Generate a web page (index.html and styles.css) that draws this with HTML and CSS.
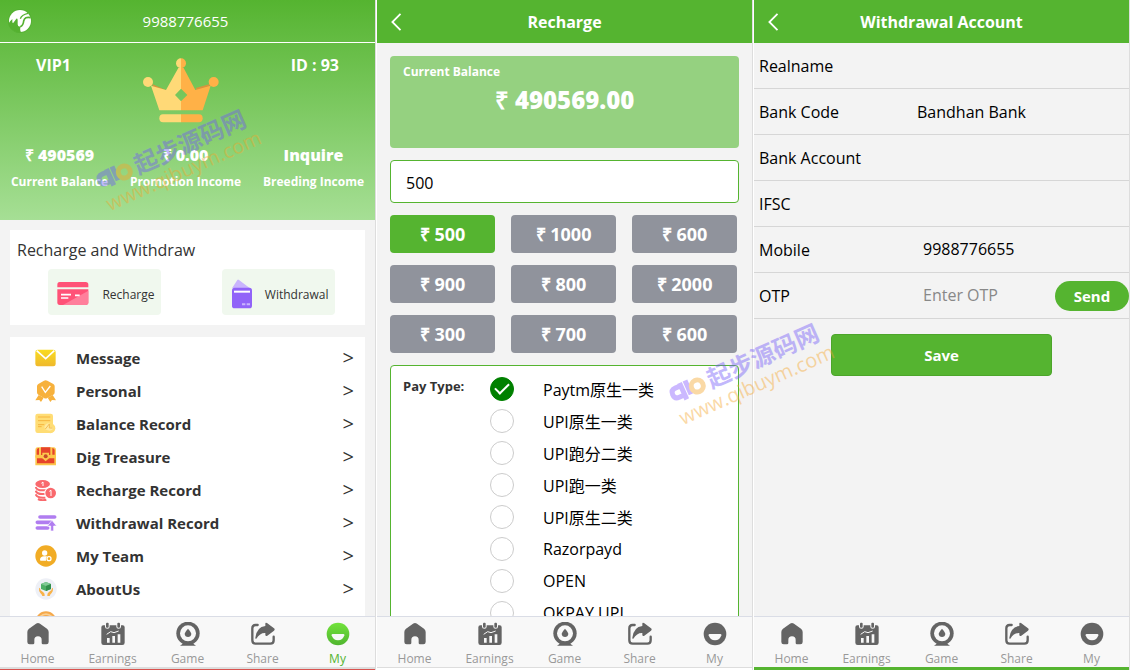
FILE: index.html
```html
<!DOCTYPE html>
<html lang="en">
<head>
<meta charset="UTF-8" />
<meta name="viewport" content="width=device-width, initial-scale=1" />
<title>My Wallet</title>
<link rel="stylesheet" href="styles.css">
</head>
<body>

<!-- tab bar icons, shared by all screens -->
<svg class="sprite" aria-hidden="true">
  <symbol id="icon-home" viewBox="0 0 72 72">
    <path d="M31 4.500Q36 1 41 4.500L63 20Q68 24 68 30V60Q68 67 61 67H51Q47 67 47 63V54Q47 43 36 43T25 54V63Q25 67 21 67H11Q4 67 4 60V30Q4 24 9 20Z"/>
  </symbol>
  <symbol id="icon-earnings" viewBox="0 0 72 72">
    <path d="M7 10H12V14Q12 20 19 20T26 14V10H46V14Q46 20 53 20T60 14V10H65Q71 10 71 16V62Q71 69 64 69H8Q1 69 1 62V16Q1 10 7 10Z"/>
    <rect x="15" y="2" width="8" height="15" rx="3"/>
    <rect x="49" y="2" width="8" height="15" rx="3"/>
    <path d="M17 37L29 29L39 32L53 27" fill="none" stroke="#f8f8f8" stroke-width="3"/>
    <path d="M18 48H26V62H18ZM34 42H42V62H34ZM50 37H58V62H50Z" fill="#f8f8f8"/>
  </symbol>
  <symbol id="icon-game" viewBox="0 0 72 72">
    <path d="M21 62H51Q52 67 60 71H12Q20 67 21 62Z"/>
    <circle cx="36" cy="34" r="35"/>
    <circle cx="36" cy="34" r="24" fill="#f8f8f8"/>
    <path d="M36 20Q46 31 46 36Q45 45 36 45T26 36Q26 31 36 20Z"/>
  </symbol>
  <symbol id="icon-share" viewBox="0 0 72 72">
    <path d="M20 9H14Q4 9 4 19V55Q4 65 14 65H58Q68 65 68 55V44" fill="none" stroke="currentColor" stroke-width="7" stroke-linecap="round"/>
    <path d="M43 5Q43 0 48 3L69 19Q73 22 69 26L49 41Q44 44 43 39V33Q27 32 16 50Q13 52 13 47Q17 15 43 12Z"/>
  </symbol>
  <symbol id="icon-my" viewBox="0 0 72 72">
    <circle cx="36" cy="36" r="34"/>
    <path d="M20 36H52Q56 36 55 40Q51 55 36 55T17 40Q16 36 20 36Z" fill="#f8f8f8"/>
  </symbol>
</svg>

<main class="screens">

  <section class="screen">
    <div class="profile">
      <header class="profile-bar">
        <svg class="logo" viewBox="0 0 72 72" aria-hidden="true">
          <circle cx="36" cy="36" r="36" fill="#48a628" opacity="0.4"/>
          <circle cx="36" cy="36" r="33" fill="#fff"/>
          <path d="M1 44Q6 36 13 30V39Q14 45 18 39L25 29Q29 26 29 34V46Q30 56 39 51Q34 59 39 70Q28 73 19 67Q4 58 1 44Z" fill="#55b130"/>
          <path d="M37 53Q46 49 47 36Q50 22 68 26" fill="none" stroke="#55b130" stroke-width="5"/>
          <path d="M37 29Q41 17 60 13" fill="none" stroke="#55b130" stroke-width="4"/>
        </svg>
        <span>9988776655</span>
      </header>

      <div class="vip">
        <strong>VIP1</strong>
        <svg class="crown" viewBox="0 0 228 195" aria-hidden="true">
          <path d="M27 78L68 96L60 110L32 88Z" fill="#d8943d"/>
          <path d="M201 78L158 90L166 110L198 88Z" fill="#d8943d"/>
          <path d="M49 157L24 83L69 96L106 30H114V92L96 111L114 130V157Z" fill="#ffd977"/>
          <path d="M179 157L203 83L157 96L122 30H114V92L133 111L114 130V157Z" fill="#ffb147"/>
          <circle cx="15" cy="72" r="15" fill="#ffd977"/>
          <circle cx="212" cy="72" r="15" fill="#ffb147"/>
          <path d="M114 1A15 15 0 0 0 114 31Z" fill="#ffd977"/>
          <path d="M114 1A15 15 0 0 1 114 31Z" fill="#ffb147"/>
          <path d="M114 169H60Q49 169 49 181T60 193H114Z" fill="#ffd977"/>
          <path d="M114 169H168Q179 169 179 181T168 193H114Z" fill="#ffb147"/>
        </svg>
        <strong>ID : 93</strong>
      </div>

      <div class="stats">
        <div class="stat"><b>₹ 490569</b><span>Current Balance</span></div>
        <div class="stat"><b>₹ 0.00</b><span>Promotion Income</span></div>
        <div class="stat"><b>Inquire</b><span>Breeding Income</span></div>
      </div>
    </div>

    <div class="content">
      <div class="wallet">
        <h2>Recharge and Withdraw</h2>
        <div class="wallet-actions">
          <a href="#recharge">
            <svg class="card-icon" viewBox="0 0 96 72" aria-hidden="true">
              <path d="M8 0H86Q94 0 94 8V16H1V8Q1 0 8 0Z" fill="#ff5277"/>
              <path d="M1 22H94V61Q94 69 86 69H8Q1 69 1 61Z" fill="#ff5277"/>
              <path d="M94 26V61Q94 69 86 69H18Z" fill="#ff7f9b"/>
              <path d="M12 38H42M12 48H34M54 40H68" stroke="#fff" stroke-width="5"/>
            </svg>
            Recharge
          </a>
          <a href="#withdrawal">
            <svg class="purse-icon" viewBox="0 0 64 90" aria-hidden="true">
              <path d="M2 28L18 3Q20 0 23 3L56 28Z" fill="#c9b4fd"/>
              <rect x="2" y="26" width="60" height="62" rx="8" fill="#9163f8"/>
              <path d="M8 38H56" stroke="#fff" stroke-width="6"/>
              <path d="M32 76H42M46 76H56" stroke="#c9b4fd" stroke-width="6"/>
            </svg>
            Withdrawal
          </a>
        </div>
      </div>

      <nav class="menu">
        <a href="#message">
          <svg viewBox="0 0 66 66" aria-hidden="true">
            <defs><linearGradient id="mail" x1="0" y1="0" x2="0" y2="1"><stop offset="0" stop-color="#f9dc20"/><stop offset="1" stop-color="#efb82c"/></linearGradient></defs>
            <rect x="1" y="8" width="61" height="50" rx="7" fill="url(#mail)"/>
            <path d="M5 11L32 35L58 11" fill="none" stroke="#fff" stroke-width="5"/>
          </svg>
          <span>Message</span><i>&gt;</i>
        </a>
        <a href="#personal">
          <svg viewBox="0 0 66 66" aria-hidden="true">
            <path d="M11 45L26 53L18 66L13 60L1 61Z" fill="#f7b13c"/>
            <path d="M53 45L38 53L46 66L51 60L63 61Z" fill="#f7b13c"/>
            <path d="M27 2Q32-1 37 2L55 12Q59 14 59 19V37Q59 42 55 44L37 54Q32 57 27 54L10 44Q6 42 6 37V19Q6 14 10 12Z" fill="#f7b13c"/>
            <path d="M20 20L31 37L46 18" fill="none" stroke="#fff" stroke-width="4"/>
          </svg>
          <span>Personal</span><i>&gt;</i>
        </a>
        <a href="#balance-record">
          <svg viewBox="0 0 66 66" aria-hidden="true">
            <rect x="1" y="2" width="53" height="58" rx="7" fill="#ffdd75"/>
            <circle cx="46" cy="46" r="15" fill="#ffdd75"/>
            <path d="M9 12H46M9 23H46M9 35H28M9 41H20" stroke="#f6b53e" stroke-width="3"/>
            <path d="M28 43A15 15 0 0 1 43 31V43H55Q54 53 44 53Q30 53 28 43Z" fill="#ffe9a0"/>
            <path d="M31 48L43 33V45H53" fill="none" stroke="#f3bd55" stroke-width="3"/>
          </svg>
          <span>Balance Record</span><i>&gt;</i>
        </a>
        <a href="#dig-treasure">
          <svg viewBox="0 0 66 66" aria-hidden="true">
            <path d="M8 4H56Q63 4 63 14V58H1V14Q1 4 8 4Z" fill="#fcc64c"/>
            <path d="M18 4H46V27H18ZM6 10Q8 6 12 6V26H5V14ZM52 6Q56 6 59 11V26H52ZM6 37H58V52H6Z" fill="#e6432b"/>
            <path d="M1 28H63V35H1Z" fill="#fcc64c"/>
            <path d="M22 20H42V37L32 46L22 37Z" fill="#fcc64c"/>
            <circle cx="32" cy="31" r="6" fill="#c5492b"/>
          </svg>
          <span>Dig Treasure</span><i>&gt;</i>
        </a>
        <a href="#recharge-record">
          <svg viewBox="0 0 66 66" aria-hidden="true">
            <ellipse cx="23" cy="15" rx="22" ry="12" fill="#f9696d"/>
            <g fill="none" stroke="#f9696d" stroke-width="6">
              <path d="M2 24Q6 35 24 34Q40 34 45 26"/>
              <path d="M2 35Q6 46 24 45Q29 45 32 44"/>
              <path d="M2 46Q6 56 24 56H31"/>
              <path d="M9 60Q20 66 34 62"/>
            </g>
            <circle cx="47" cy="42" r="19" fill="#fff"/>
            <circle cx="47" cy="42" r="16" fill="#f9696d"/>
            <path d="M19 13L24 9V21M43 37L48 34V51" fill="none" stroke="#fff" stroke-width="3"/>
          </svg>
          <span>Recharge Record</span><i>&gt;</i>
        </a>
        <a href="#withdrawal-record">
          <svg viewBox="0 0 66 66" aria-hidden="true">
            <g fill="none" stroke="#b07df0" stroke-width="11" stroke-linecap="round">
              <path d="M15 15H59M7 31H48M7 48H38"/>
            </g>
            <path d="M51 25L65 42H56V57H47V42H37Z" fill="#b07df0" stroke="#fff" stroke-width="2"/>
          </svg>
          <span>Withdrawal Record</span><i>&gt;</i>
        </a>
        <a href="#my-team">
          <svg viewBox="0 0 66 66" aria-hidden="true">
            <circle cx="33" cy="33" r="32" fill="#f1ac25"/>
            <circle cx="29" cy="24" r="8" fill="#fff"/>
            <path d="M15 45Q15 34 28 34H36Q31 39 33 47H18Q15 47 15 45Z" fill="#fff"/>
            <circle cx="42" cy="41" r="6" fill="none" stroke="#fff" stroke-width="4"/>
          </svg>
          <span>My Team</span><i>&gt;</i>
        </a>
        <a href="#about-us">
          <svg viewBox="0 0 66 66" aria-hidden="true">
            <circle cx="33" cy="33" r="32" fill="#eef0f6"/>
            <path d="M33 12L48 18V33L33 39L18 33V18Z" fill="#4eaf66"/>
            <path d="M33 12L48 18L33 24L18 18Z" fill="#81c995"/>
            <path d="M33 24V39L48 33V18Z" fill="#328e4c"/>
            <path d="M12 29Q16 29 17 37L25 43Q30 46 29 54H22Q21 49 16 45Q11 39 12 29ZM54 29Q50 29 49 37L41 43Q36 46 37 54H44Q45 49 50 45Q55 39 54 29Z" fill="#f8b248"/>
          </svg>
          <span>AboutUs</span><i>&gt;</i>
        </a>
        <a href="#more" aria-label="More">
          <svg viewBox="0 0 66 66" aria-hidden="true">
            <circle cx="33" cy="33" r="32" fill="#f5a94b"/>
            <path d="M15 17Q33 2 51 17" fill="none" stroke="#fbd093" stroke-width="5"/>
          </svg>
        </a>
      </nav>
    </div>

    <nav class="tabs">
      <a href="#home"><svg><use href="#icon-home"/></svg>Home</a>
      <a href="#earnings"><svg><use href="#icon-earnings"/></svg>Earnings</a>
      <a href="#game"><svg><use href="#icon-game"/></svg>Game</a>
      <a href="#share"><svg><use href="#icon-share"/></svg>Share</a>
      <a href="#my" class="active">
        <svg viewBox="0 0 72 72">
          <defs><linearGradient id="smile" x1="0" y1="0" x2="0" y2="1"><stop offset="0" stop-color="#72e33c"/><stop offset="1" stop-color="#50b52f"/></linearGradient></defs>
          <circle cx="36" cy="36" r="34" fill="url(#smile)"/>
          <path d="M20 36H52Q56 36 55 40Q51 55 36 55T17 40Q16 36 20 36Z" fill="#f8f8f8"/>
        </svg>My
      </a>
    </nav>
    <div class="edge edge-red"></div>
  </section>

  <section class="screen">
    <header class="title-bar">
      <a href="#back" aria-label="Back"><svg viewBox="0 0 12 20"><path d="M11 1L2 10L11 19"/></svg></a>
      <h1>Recharge</h1>
    </header>

    <form class="content recharge">
      <div class="balance">
        <span>Current Balance</span>
        <strong>₹ 490569.00</strong>
      </div>

      <input class="amount" type="text" value="500" aria-label="Amount">

      <div class="amounts">
        <button type="button" class="selected">₹ 500</button>
        <button type="button">₹ 1000</button>
        <button type="button">₹ 600</button>
        <button type="button">₹ 900</button>
        <button type="button">₹ 800</button>
        <button type="button">₹ 2000</button>
        <button type="button">₹ 300</button>
        <button type="button">₹ 700</button>
        <button type="button">₹ 600</button>
      </div>

      <div class="pay">
        <span class="pay-title">Pay Type:</span>
        <div class="pay-list">
          <label><input type="radio" name="pay" checked>Paytm原生一类</label>
          <label><input type="radio" name="pay">UPI原生一类</label>
          <label><input type="radio" name="pay">UPI跑分二类</label>
          <label><input type="radio" name="pay">UPI跑一类</label>
          <label><input type="radio" name="pay">UPI原生二类</label>
          <label><input type="radio" name="pay">Razorpayd</label>
          <label><input type="radio" name="pay">OPEN</label>
          <label><input type="radio" name="pay">OKPAY UPI</label>
        </div>
      </div>
    </form>

    <nav class="tabs">
      <a href="#home"><svg><use href="#icon-home"/></svg>Home</a>
      <a href="#earnings"><svg><use href="#icon-earnings"/></svg>Earnings</a>
      <a href="#game"><svg><use href="#icon-game"/></svg>Game</a>
      <a href="#share"><svg><use href="#icon-share"/></svg>Share</a>
      <a href="#my"><svg><use href="#icon-my"/></svg>My</a>
    </nav>
    <div class="edge"></div>
  </section>

  <section class="screen">
    <header class="title-bar">
      <a href="#back" aria-label="Back"><svg viewBox="0 0 12 20"><path d="M11 1L2 10L11 19"/></svg></a>
      <h1>Withdrawal Account</h1>
    </header>

    <form class="content account">
      <div class="field">
        <label for="realname">Realname</label>
        <input type="text" id="realname">
      </div>
      <div class="field">
        <label for="bankCode">Bank Code</label>
        <select id="bankCode">
          <option>Bandhan Bank</option>
        </select>
      </div>
      <div class="field">
        <label for="bankAccount">Bank Account</label>
        <input type="text" id="bankAccount">
      </div>
      <div class="field">
        <label for="ifsc">IFSC</label>
        <input type="text" id="ifsc">
      </div>
      <div class="field">
        <label for="mobile">Mobile</label>
        <input type="tel" id="mobile" value="9988776655">
      </div>
      <div class="field">
        <label for="otp">OTP</label>
        <input type="text" id="otp" placeholder="Enter OTP">
        <button type="button" class="send">Send</button>
      </div>
      <button type="submit" class="save">Save</button>
    </form>

    <nav class="tabs">
      <a href="#home"><svg><use href="#icon-home"/></svg>Home</a>
      <a href="#earnings"><svg><use href="#icon-earnings"/></svg>Earnings</a>
      <a href="#game"><svg><use href="#icon-game"/></svg>Game</a>
      <a href="#share"><svg><use href="#icon-share"/></svg>Share</a>
      <a href="#my"><svg><use href="#icon-my"/></svg>My</a>
    </nav>
    <div class="edge edge-green"></div>
  </section>

</main>

<div class="watermark watermark-first">
  <div class="watermark-name">
    <svg viewBox="0 0 38 24" aria-hidden="true">
      <path d="M14 6H8Q3 6 3 11T8 16H14M14 3V21M20 3V18" fill="none" stroke="#6a5cf5" stroke-width="5"/>
      <circle cx="29" cy="13" r="6" fill="none" stroke="#f5a52a" stroke-width="5"/>
    </svg>
    起步源码网
  </div>
  <div class="watermark-url">www.qibuym.com</div>
</div>
<div class="watermark watermark-second">
  <div class="watermark-name">
    <svg viewBox="0 0 38 24" aria-hidden="true">
      <path d="M14 6H8Q3 6 3 11T8 16H14M14 3V21M20 3V18" fill="none" stroke="#8458ff" stroke-width="5"/>
      <circle cx="29" cy="13" r="6" fill="none" stroke="#f5a52a" stroke-width="5"/>
    </svg>
    起步源码网
  </div>
  <div class="watermark-url">www.qibuym.com</div>
</div>

</body>
</html>
```

FILE: styles.css
```css
* {
  box-sizing: border-box;
}

body {
  margin: 0;
  height: 100vh;
  overflow: hidden;
  position: relative;
  background: #fff;
  color: #000;
  font-family: 'Open Sans', 'Noto Sans CJK SC', sans-serif;
  font-size: 16px;
}

h1, h2 {
  margin: 0;
}

a {
  color: inherit;
  text-decoration: none;
}

button, input, select {
  font-family: inherit;
}

.sprite {
  display: none;
}

.screens {
  display: grid;
  grid-template-columns: repeat(3, 1fr);
  gap: 1px;
  height: 100%;
}

.screen {
  display: flex;
  flex-direction: column;
  min-width: 0;
  min-height: 0;
  background: #f3f3f3;
  border-right: 1px solid #ddd;
}

.content {
  flex: 1;
  min-height: 0;
  overflow: hidden;
}

/* Profile */
.profile {
  background: linear-gradient(#55b430, #a6df95);
  color: #fff;
  padding-bottom: 28px;
}

.profile-bar {
  display: grid;
  grid-template-columns: 24px 1fr 24px;
  align-items: center;
  height: 43px;
  padding: 0 12px 0 8px;
  border-bottom: 1px solid #fff;
  font-size: 15px;
  text-align: center;
}

.logo {
  width: 24px;
  height: 24px;
}

.vip {
  display: flex;
  justify-content: space-between;
  padding: 10px 36px 0;
  font-size: 16px;
  line-height: 24px;
}

.crown {
  width: 76px;
  height: 65px;
  margin-top: 5px;
}

.stats {
  display: flex;
  justify-content: space-around;
  margin-top: 20px;
  text-align: center;
}

.stat {
  display: flex;
  flex-direction: column;
  gap: 5px;
  font-size: 12px;
  font-weight: 700;
  line-height: 20px;
}

.stat b {
  font-size: 16px;
  line-height: 24px;
}

.wallet {
  margin: 10px 10px 12px;
  padding: 8px 0 10px 7px;
  background: #fff;
  color: #333;
}

.wallet h2 {
  font-size: 16px;
  font-weight: 400;
  line-height: 24px;
}

.wallet-actions {
  display: flex;
  justify-content: space-around;
  margin-top: 7px;
}

.wallet-actions a {
  display: flex;
  align-items: center;
  justify-content: space-between;
  width: 113px;
  height: 46px;
  padding: 4px 6px 0 9px;
  border-radius: 4px;
  background: #f0f8ee;
  font-size: 12px;
}

.card-icon {
  width: 32px;
  height: 24px;
}

.purse-icon {
  width: 22px;
  height: 30px;
}

.menu {
  margin: 0 10px;
  padding: 4px 11px 4px 25px;
  background: #fff;
  color: #333;
}

.menu a {
  display: flex;
  align-items: center;
  gap: 19px;
  height: 33px;
  font-size: 15px;
  font-weight: 700;
}

.menu svg {
  width: 22px;
  height: 22px;
}

.menu i {
  margin-left: auto;
  font-size: 20px;
  font-style: normal;
  font-weight: 400;
}

/* Tab bar */
.tabs {
  display: grid;
  grid-template-columns: repeat(5, 1fr);
  height: 51px;
  padding-top: 5px;
  border-top: 1px solid #dadde6;
  background: #f8f8f8;
}

.tabs a {
  display: flex;
  flex-direction: column;
  align-items: center;
  gap: 5px;
  color: #999;
  font-size: 12px;
  line-height: 16px;
}

.tabs svg {
  width: 24px;
  height: 24px;
  color: #646464;
  fill: currentColor;
}

.tabs .active {
  color: #55b430;
}

.edge {
  height: 3px;
  border-top: 1px solid #ddd;
  background: #fff;
}

.edge-red {
  border-bottom: 1px solid #d9534f;
  background: #ddd;
}

.edge-green {
  border: 0;
  background: #55b430;
}

/* Title bar */
.title-bar {
  display: grid;
  grid-template-columns: 12px 1fr 12px;
  align-items: center;
  height: 43px;
  padding: 0 13px;
  background: #55b430;
  color: #fff;
}

.title-bar h1 {
  font-size: 16px;
  text-align: center;
}

.title-bar svg {
  display: block;
  width: 12px;
  height: 18px;
  fill: none;
  stroke: #fff;
  stroke-width: 2;
}

/* Recharge */
.recharge {
  display: flex;
  flex-direction: column;
  gap: 12px;
  padding: 13px 13px 0;
}

.balance {
  display: flex;
  flex: none;
  flex-direction: column;
  height: 92px;
  padding: 6px 13px;
  border-radius: 4px;
  background: #95d180;
  color: #fff;
  font-size: 12px;
  font-weight: 700;
  line-height: 20px;
}

.balance strong {
  margin-top: 4px;
  font-size: 24px;
  line-height: 28px;
  text-align: center;
}

.amount {
  flex: none;
  width: 100%;
  height: 43px;
  padding: 2px 15px 0;
  border: 1px solid #55b430;
  border-radius: 4px;
  background: #fff;
  font-size: 16px;
}

.amounts {
  display: grid;
  grid-template-columns: repeat(3, 1fr);
  gap: 12px 16px;
  padding-right: 2px;
}

.amounts button {
  height: 38px;
  padding: 0;
  border: 0;
  border-radius: 4px;
  background: #90939c;
  color: #fff;
  font-size: 18px;
  font-weight: 700;
}

.amounts .selected {
  background: #55b430;
}

.pay {
  display: flex;
  padding: 7px 12px;
  border: 1px solid #55b430;
  border-radius: 4px;
  background: #fff;
}

.pay-title {
  width: 87px;
  color: #333;
  font-size: 13px;
  font-weight: 700;
  line-height: 26px;
}

.pay-list label {
  display: flex;
  align-items: center;
  gap: 29px;
  height: 32px;
  white-space: nowrap;
}

.pay-list input {
  display: grid;
  place-content: center;
  appearance: none;
  width: 24px;
  height: 24px;
  margin: 0;
  border: 1px solid #ccc;
  border-radius: 50%;
  background: #fff;
}

.pay-list input:checked {
  border-color: #008000;
  background: #008000;
}

.pay-list input:checked::after {
  content: '';
  width: 12px;
  height: 6px;
  margin-bottom: 4px;
  border-left: 2px solid #fff;
  border-bottom: 2px solid #fff;
  transform: rotate(-45deg);
}

/* Withdrawal account */
.account {
  display: flex;
  flex-direction: column;
}

.field {
  display: grid;
  grid-template-columns: 158px 1fr auto;
  align-items: center;
  height: 46px;
  padding-left: 5px;
  border-bottom: 1px solid #d6d6d6;
}

.field input, .field select {
  width: 100%;
  min-width: 0;
  height: 40px;
  padding: 0 0 2px 6px;
  border: 0;
  outline: 0;
  background: transparent;
  color: #000;
  font-size: 16px;
}

.field select {
  appearance: none;
  padding: 0;
}

.field input::placeholder {
  color: #888;
}

.send {
  width: 74px;
  height: 30px;
  border: 0;
  border-radius: 15px;
  background: #55b430;
  color: #fff;
  font-size: 15px;
  font-weight: 700;
}

.save {
  width: 59%;
  height: 42px;
  margin: 15px auto 0;
  border: 1px solid #4ca52a;
  border-radius: 4px;
  background: #55b430;
  color: #fff;
  font-size: 15px;
  font-weight: 700;
}

/* Watermark over the screens */
.watermark {
  position: absolute;
  width: 172px;
  color: #7058f8;
  opacity: 0.42;
  transform: rotate(-24deg);
  pointer-events: none;
  white-space: nowrap;
}

.watermark-first {
  left: 94px;
  top: 133px;
}

.watermark-second {
  left: 667px;
  top: 347px;
}

.watermark-name {
  display: flex;
  align-items: center;
  gap: 3px;
  font-size: 24px;
  font-weight: 700;
  line-height: 28px;
}

.watermark-name svg {
  width: 38px;
  height: 24px;
}

.watermark-url {
  color: #f5a52a;
  font-size: 20px;
  font-weight: 500;
  line-height: 20px;
}
```
